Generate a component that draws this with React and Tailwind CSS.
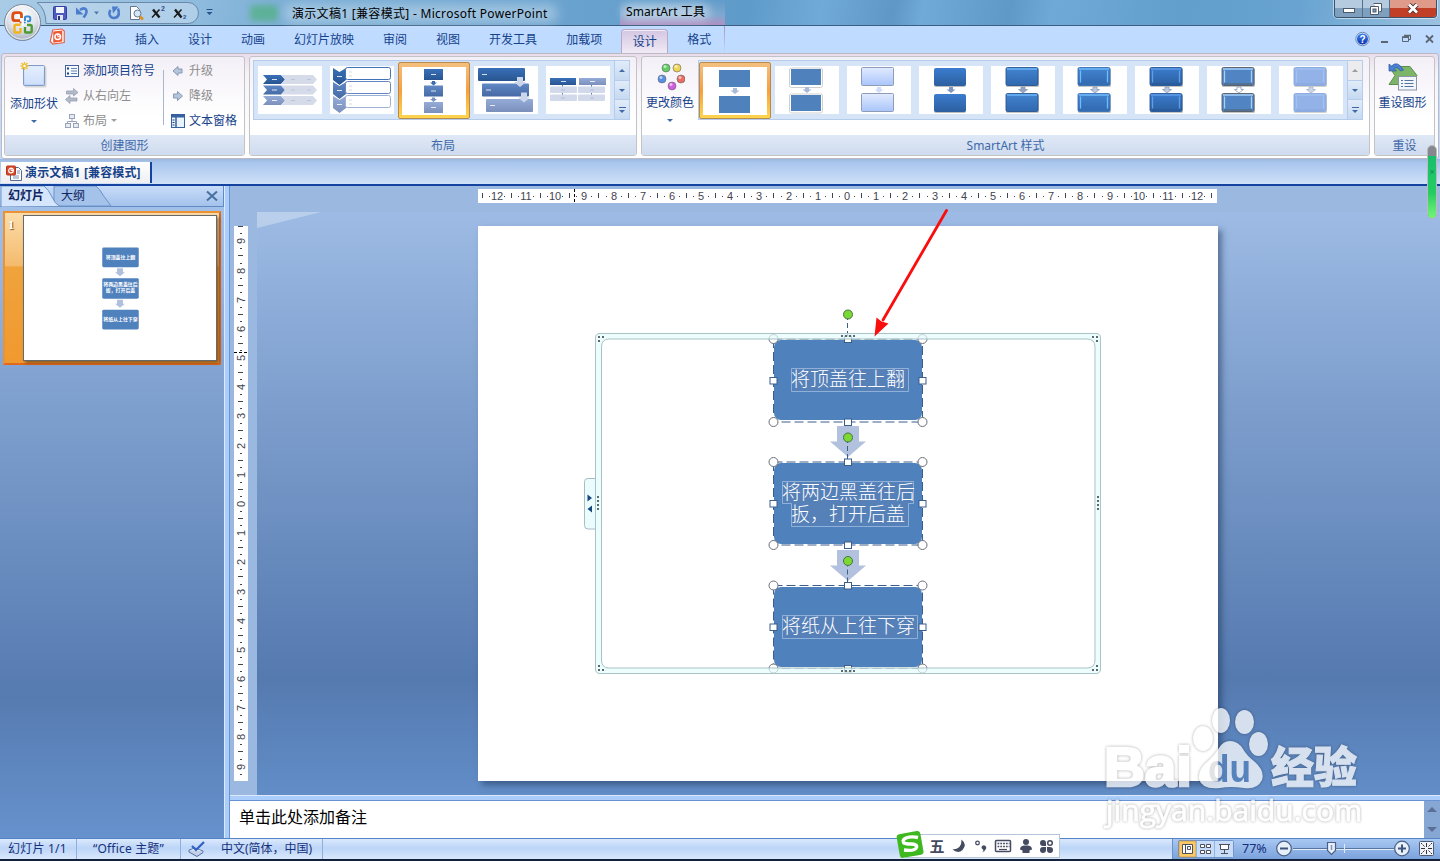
const ribbonTabs = ["开始", "插入", "设计", "动画", "幻灯片放映", "审阅", "视图", "开发工具", "加载项"];

const nodes = [
  { y: 340, h: 80, lines: [["将顶盖往上翻", 791, 385.5]], box: "M791.5 368.5h117v23h-117z" },
  {
    y: 463,
    h: 81,
    lines: [
      ["将两边黑盖往后", 782, 498.5],
      ["扳，打开后盖", 791, 520.5],
    ],
    box: "M782.5 481.5h131v22h-5v23h-117v-23h-9z",
  },
  { y: 587, h: 80, lines: [["将纸从上往下穿", 782, 632.5]], box: "M782.5 615.5h135v23h-135z" },
];

const thumbNodes = [
  { y: 247, h: 20, lines: ["将顶盖往上翻"] },
  { y: 278, h: 21, lines: ["将两边黑盖往后", "扳，打开后盖"] },
  { y: 310, h: 20, lines: ["将纸从上往下穿"] },
];

const Gradients = () => (
  <svg width="0" height="0" className="absolute">
    <defs>
      <linearGradient id="blue1" x2="0" y2="1">
        <stop stopColor="#3a70b8" />
        <stop offset="1" stopColor="#285590" />
      </linearGradient>
      <linearGradient id="blue2" x2="0" y2="1">
        <stop stopColor="#6189c6" />
        <stop offset="1" stopColor="#4569a3" />
      </linearGradient>
      <linearGradient id="blue3" x2="0" y2="1">
        <stop stopColor="#95acd8" />
        <stop offset="1" stopColor="#7b8fbb" />
      </linearGradient>
      <linearGradient id="pale" x2="0" y2="1">
        <stop stopColor="#e2ebff" />
        <stop offset="1" stopColor="#a9c5fb" />
      </linearGradient>
      <linearGradient id="strong" x2="0" y2="1">
        <stop stopColor="#3b7ccf" />
        <stop offset="1" stopColor="#2c5f9f" />
      </linearGradient>
      <linearGradient id="glossy" x2="0" y2="1">
        <stop stopColor="#4384d0" />
        <stop offset="1" stopColor="#3068ae" />
      </linearGradient>
      <radialGradient id="orb" cx="0.5" cy="0.3" r="0.75">
        <stop stopColor="#ffffff" />
        <stop offset="0.55" stopColor="#dfe3ea" />
        <stop offset="1" stopColor="#9aa5b5" />
      </radialGradient>
      <linearGradient id="help" x2="0" y2="1">
        <stop stopColor="#3f86ee" />
        <stop offset="1" stopColor="#0b2fb0" />
      </linearGradient>
      <linearGradient id="pawText" gradientUnits="userSpaceOnUse" x1="1217" x2="1219" y1="0" y2="0">
        <stop stopColor="#d9dadc" />
        <stop offset="1" stopColor="#5581bb" />
      </linearGradient>
    </defs>
  </svg>
);

const Caret = ({ color = "#3f6aa5", className = "" }) => (
  <svg width="6" height="3" viewBox="0 0 6 3" className={className}>
    <path d="M0 0h6L3 3z" fill={color} />
  </svg>
);

const OfficeButton = () => (
  <svg className="absolute left-0 top-0 z-10" width="46" height="46" viewBox="0 0 46 46">
    <circle cx="22.5" cy="22.5" r="18" fill="url(#orb)" stroke="#77869b" />
    <circle cx="22.5" cy="22.5" r="16.7" fill="none" stroke="#fff" strokeOpacity="0.8" />
    <g fill="none" strokeLinejoin="round">
      <path d="M20 20.7h-4.500q-2.800 0-2.800-2.800v-2.200q0-3 3-3h3.500q2.300 0 2.300 2.300v3" stroke="#dd4f14" strokeWidth="2.8" />
      <path d="M25 21v-3.500q0-1 1-1h2.700q1.500 0 1.500 1.500v2q0 1.200-1.200 1.200H27" stroke="#3a8bd2" strokeWidth="2.1" />
      <path d="M20.500 24.700h-4.500q-1.500 0-1.500 1.500V31q0 1.500 1.500 1.500h3q1.500 0 1.500-1.500v-3" stroke="#f4b21b" strokeWidth="2.4" />
      <path d="M25 27v4.500q0 1 1 1h4q1.700 0 1.700-1.700v-4.300q0-1.500-1.500-1.500H27" stroke="#4f9b31" strokeWidth="2.4" />
    </g>
    <path d="M22.900 20.500v5M20.500 22.800h5" stroke="#fff" strokeWidth="1.2" />
    <circle cx="20.600" cy="22.600" r="1" fill="#dd4f14" />
    <circle cx="24.800" cy="22.600" r="1" fill="#3a8bd2" />
  </svg>
);

const QuickAccess = () => (
  <svg width="184" height="25" viewBox="36 0 184 25">
    <path d="M37 2.500h151a10.500 10.500 0 0 1 0 21H46Q46 9 37 2.500z" fill="#c2d9ee" fillOpacity="0.65" stroke="#6b89a8" />
    {/* save */}
    <rect x="53.5" y="6.5" width="13" height="13" rx="1" fill="#4e5cc0" stroke="#36409a" />
    <rect x="56" y="7" width="8" height="6" fill="#f2f5fd" />
    <rect x="57" y="15" width="6" height="5" fill="#e0e4f2" />
    <rect x="58" y="16" width="2" height="4" fill="#2e3474" />
    {/* undo and repeat */}
    <path d="M80 10q4-3 6-.5 1.800 3-2.500 8" fill="none" stroke="#4b7dcb" strokeWidth="2.6" />
    <path d="M76 7.500v7h7.500z" fill="#4b7dcb" />
    <path d="M94 11.500h5l-2.500 3z" fill="#5477a7" />
    <path d="M110.500 10q-1.500 2-1 4.500 1 3.500 4.500 3.500t4.700-3.500q.5-3-.8-6" fill="none" stroke="#4b7dcb" strokeWidth="2.6" />
    <path d="M112 6.500h6.500l-5.500 7z" fill="#4b7dcb" />
    {/* print preview */}
    <path d="M130.5 6.500h6l3 3v10h-9z" fill="#fff" stroke="#62748d" />
    <circle cx="137.5" cy="13.5" r="3.5" fill="#d4e6f7" stroke="#68788c" />
    <path d="M140 16.500l3 3" stroke="#d69327" strokeWidth="2.8" />
    {/* superscript and subscript */}
    <g stroke="#1a1a1a">
      <path d="M153 9.500l6.500 8M175 9.500l6.500 8" strokeWidth="2.400" />
      <path d="M159.500 9.500l-7.500 8M181.500 9.500l-7.500 8" strokeWidth="1.500" />
    </g>
    <text x="161" y="11" fontSize="7" fontWeight="700" fill="#27508f" fontFamily="Liberation Sans, sans-serif">2</text>
    <text x="183" y="19" fontSize="6" fontWeight="700" fill="#27508f" fontFamily="Liberation Sans, sans-serif">2</text>
    <path d="M206.5 9.500h6" stroke="#27508f" />
    <path d="M206.5 12h6l-3 3z" fill="#27508f" />
  </svg>
);

const WindowButtons = () => (
  <div className="mr-[3px] flex h-[18px] w-[103px] overflow-hidden rounded-b-[4px] border border-t-0 border-[#39536e] shadow-[0_0_0_1px_#ffffff80]">
    <div className="flex w-7 items-center justify-center border-r border-[#53708c] bg-linear-to-b from-[#b5cbe0] from-50% to-[#7e9fbd] to-50%">
      <div className="mt-1 h-[5px] w-3 border border-[#4b5b6c] bg-white"></div>
    </div>
    <div className="flex w-[27px] items-center justify-center border-r border-[#53708c] bg-linear-to-b from-[#b5cbe0] from-50% to-[#7e9fbd] to-50%">
      <svg width="12" height="12" viewBox="0 0 12 12">
        <path d="M3.500.5h8v8h-2M.5 3.500h8v8h-8z" fill="#fff" stroke="#4b5b6c" />
        <rect x="3" y="6" width="3" height="3" fill="#7e9fbd" stroke="#4b5b6c" />
      </svg>
    </div>
    <div className="flex flex-1 items-center justify-center bg-linear-to-b from-[#e09a8a] from-45% to-[#c23f27] to-50%">
      <svg width="12" height="11" viewBox="0 0 12 11">
        <path d="M2 1.500l8 8M10 1.500l-8 8" stroke="#533" strokeWidth="4.6" />
        <path d="M2 1.500l8 8M10 1.500l-8 8" stroke="#fff" strokeWidth="2.8" />
      </svg>
    </div>
  </div>
);

const TitleBar = () => (
  <div className="relative flex h-[26px] items-start border-b border-[#3c5f80] bg-[linear-gradient(100deg,#a9cbe6_0%,#8dbadd_14%,#75aad3_22%,#6ba3cf_38%,#5f9bca_52%,#70aad8_57%,#5f98c6_62%,#70aad9_64%,#5f99c8_70%,#6fa9d7_73%,#629fcd_82%,#68a3d1_90%,#9bc2e0_100%)]">
    <div className="absolute left-[250px] top-[5px] h-4 w-7 rounded bg-[#46b06b]/60 blur-[3px]"></div>
    <div className="absolute left-[284px] top-[4px] h-[19px] w-[274px] rounded-full bg-white/35 blur-[6px]"></div>
    <div className="absolute left-[620px] top-0 h-[25px] w-[105px] bg-linear-to-b from-transparent via-[#9db4d4]/50 via-60% to-[#b78fc2]/90"></div>
    <div className="absolute left-[622px] top-[4px] h-4 w-[88px] rounded-full bg-white/45 blur-[5px]"></div>
    <div className="ml-9">
      <QuickAccess />
    </div>
    <div className="relative ml-[72px] w-[334px] text-[12px] leading-[27px] tracking-[0.3px] text-black">演示文稿1 [兼容模式] - Microsoft PowerPoint</div>
    <div className="relative flex-1 text-[12px] leading-[23px] tracking-[0.1px] text-black">SmartArt 工具</div>
    <WindowButtons />
  </div>
);

const TabRow = () => (
  <div className="flex h-[27px] items-end bg-[#bfdbff] pl-[49px] text-[12px] text-[#15428b]">
    <svg width="18.5" height="18" viewBox="0 0 18 18" className="mb-[7px] shrink-0">
      <path d="M3.500 2l9-1 2.500 2v11.500L3.500 16 1 13.500z" fill="#fff" stroke="#e2644a" strokeWidth="1.200" />
      <path d="M4 3.500l9-1v11l-9 1.200z" fill="#ee5a36" />
      <circle cx="8.500" cy="8.700" r="2.800" fill="none" stroke="#fff" strokeWidth="1.500" />
      <path d="M8.500 8.700V5.500M8.500 8.700h3" stroke="#fff" />
    </svg>
    {ribbonTabs.map((t) => (
      <div key={t} className="px-[14.5px] leading-[26px]">{t}</div>
    ))}
    <div className="mx-[4.5px] w-[47px] rounded-t-[4px] border border-b-0 border-[#b7a9c6] bg-linear-to-b from-[#d3c6e2] to-[#f1eaf4] text-center leading-[23px] shadow-[inset_0_1px_0_#f3edf7]">设计</div>
    <div className="px-[14.5px] leading-[26px]">格式</div>
    <div className="-ml-[2px] h-full w-px bg-linear-to-b from-[#a79ac0] to-[#bfdbff]"></div>
    <svg width="90" height="20" viewBox="1350 29 90 20" className="mb-1 ml-auto">
      <circle cx="1362.5" cy="39" r="6" fill="url(#help)" stroke="#dce9fb" />
      <circle cx="1362.5" cy="39" r="6.7" fill="none" stroke="#4a6690" strokeWidth="0.7" />
      <text x="1362.5" y="43" textAnchor="middle" fontSize="10" fontWeight="700" fill="#fff" fontFamily="Liberation Sans, sans-serif">?</text>
      <path d="M1381 42h7" stroke="#5c6672" strokeWidth="2" />
      <path d="M1402.5 37.500h6v4h-6zM1404.500 37v-1.500h6v4h-2" fill="none" stroke="#5c6672" />
      <path d="M1402 37h7M1404 35.500h7" stroke="#5c6672" strokeWidth="1.500" />
      <path d="M1426 35.500l7 7M1433 35.500l-7 7" stroke="#5c6672" strokeWidth="1.8" />
    </svg>
  </div>
);

const Group = ({ label, className, children }) => (
  <div className={`flex flex-col overflow-hidden rounded-[3px] border border-[#c3c3c6] bg-linear-to-b from-[#f3eff7] via-white via-60% to-white ${className}`}>
    <div className="flex h-20 px-1 pt-[3px]">{children}</div>
    <div className="h-5 bg-linear-to-b from-[#dfe8f6] to-[#cfdbee] text-center text-[12px] leading-[21px] text-[#3e6aaa]">{label}</div>
  </div>
);

const SmallButton = ({ icon, label, disabled, caret }) => (
  <div className={`flex h-[25px] items-center gap-1 text-[12px] ${disabled ? "text-[#8d8d8d]" : "text-[#15428b]"}`}>
    {icon}
    <span>{label}</span>
    {caret && <Caret color="#a0a0a0" className="ml-0" />}
  </div>
);

const BigButton = ({ icon, label, caret, className = "" }) => (
  <div className={`flex flex-col items-center text-[12px] text-[#15428b] ${className}`}>
    {icon}
    <span className="leading-[18px]">{label}</span>
    {caret && <Caret className="mt-[7px]" />}
  </div>
);

const Gallery = ({ items, selected, dim }) => (
  <div className="flex h-[60px] border border-[#b5cdeb] bg-[#d5e5f7]">
    {items.map((item, i) => (
      <div
        key={i}
        className={
          i === selected
            ? "mt-px flex h-[57px] w-[72px] items-center justify-center rounded-[2px] border border-[#b98a4b] bg-linear-to-b from-[#f3bf7e] via-[#f7a03c] to-[#fdd64f] p-[3px]"
            : "mt-px flex h-[56px] w-[72px] items-center justify-center p-1"
        }
      >
        <svg width="64" height="48" viewBox="0 0 64 48" className="bg-white">{item}</svg>
      </div>
    ))}
    <div className="flex w-[15px] flex-col border-l border-[#b5cdeb]">
      {[0, 1, 2].map((n) => (
        <div
          key={n}
          className={`flex flex-1 flex-col items-center justify-center gap-[2px] border-b border-[#b5cdeb] last:border-b-0 ${dim && n === 0 ? "bg-[#ececee]" : "bg-linear-to-b from-[#e2ecf9] to-[#c5d9f1]"}`}
        >
          {n === 2 && <div className="h-px w-[7px] bg-[#3f6aa5]"></div>}
          <Caret color={dim && n === 0 ? "#9c9c9c" : "#3f6aa5"} className={n === 0 ? "rotate-180" : ""} />
        </div>
      ))}
    </div>
  </div>
);

const Dash = ({ x, y, o = 0.8 }) => <rect x={x} y={y} width="5" height="1" fill="#fff" opacity={o} />;

const layouts = [
  <>
    {["blue1", "blue2", "blue3"].map((c, i) => (
      <g key={c} transform={`translate(5 ${9 + i * 10.5})`}>
        <path d="M0 0h18l4 4.500-4 4.500H0l4-4.500z" fill={`url(#${c})`} />
        <path d="M18 0h16l4 4.500-4 4.500H18l4-4.500zM34 0h16l4 4.500-4 4.500H34l4-4.500z" fill="#d5dbe9" />
        <Dash x={9} y={4} />
        <path d="M28 4.500h4M44 4.500h4" stroke="#bcc5d9" />
      </g>
    ))}
  </>,
  <>
    {["blue1", "blue2", "blue3"].map((c, i) => (
      <g key={c} transform={`translate(3 ${2 + i * 14})`}>
        <path d="M0 0l6.500 4L13 0v12l-6.500 5L0 12z" fill={`url(#${c})`} />
        <rect x="12.5" y="-0.500" width="45" height="12" rx="2" fill="#fff" stroke={["#4272b8", "#6487c2", "#9fb0d6"][i]} />
        <path d="M16 4h3M16 8h3" stroke="#d5d9e2" />
        <Dash x={4} y={8} />
      </g>
    ))}
  </>,
  <>
    {["blue1", "blue2", "blue3"].map((c, i) => (
      <g key={c} transform={`translate(0 ${2 + i * 16.5})`}>
        <rect x="22" width="19" height="11" fill={`url(#${c})`} />
        <Dash x={29} y={5} />
        {i < 2 && <path d="M30 12h3v1.500h2l-3.500 3-3.500-3h2z" fill={i ? "#7d95c5" : "#3a6cb2"} />}
      </g>
    ))}
  </>,
  <>
    {["blue1", "blue2", "blue3"].map((c, i) => (
      <g key={c} transform={`translate(${4 + i * 4} ${2 + i * 15.5})`}>
        <rect width="47" height="13" rx="1" fill={`url(#${c})`} />
        <Dash x={4} y={6} />
      </g>
    ))}
    <path d="M43 11h6v5h3l-6 5-6-5h3zM47 26.500h6v5h3l-6 5-6-5h3z" fill="#ccd6eb" />
  </>,
  <>
    <path d="M16.5 19v10M45.500 19v10" stroke="#5f7fb5" />
    <rect x="4" y="12" width="26" height="7" fill="url(#blue1)" />
    <rect x="33" y="12" width="27" height="7" fill="url(#blue3)" />
    {[20.5, 28.5].map((y) => (
      <g key={y}>
        <rect x="4" y={y} width="27" height="6.5" rx="1" fill="#d2d9ea" />
        <rect x="32" y={y} width="27" height="6.5" rx="1" fill="#d2d9ea" />
        <path d={`M15 ${y + 3.5}h4M44 ${y + 3.5}h4`} stroke="#b3bed7" />
      </g>
    ))}
    <Dash x={15} y={15} />
    <Dash x={44} y={15} />
  </>,
];

const MiniArrow = ({ fill = "#a9b9da", stroke = "none" }) => (
  <path d="M30 21h4v2.500h2.500L32 27l-4.500-3.500H30z" fill={fill} stroke={stroke} strokeWidth="0.8" />
);

const BevelStyle = ({ fill, edge, glow, side, arrow }) => (
  <>
    {[1.5, 27.5].map((y) => (
      <g key={y}>
        <rect x="15" y={y + 1} width="33" height="18.5" rx="1.5" fill="#555" opacity="0.35" />
        <rect x="15" y={y} width="32" height="18" rx="1.5" fill={fill} stroke={edge} strokeWidth="0.9" />
        <path d={`M16 ${y + 1.5}h30`} stroke={glow} strokeWidth="1.5" />
        {side && <path d={`M17.500 ${y + 3}v12M44.500 ${y + 3}v12`} stroke={glow} strokeWidth="1.3" />}
        {side && <path d={`M17 ${y + 16.5}h28`} stroke={edge} strokeWidth="1.5" opacity="0.6" />}
      </g>
    ))}
    <MiniArrow fill={arrow || "#bcc9e2"} stroke="#8a99b5" />
  </>
);

const styles = [
  <>
    <rect x="16" y="3" width="31" height="17" fill="#4f81bd" />
    <rect x="16" y="29" width="31" height="17" fill="#4f81bd" />
    <MiniArrow />
  </>,
  <>
    <rect x="14.5" y="2" width="33" height="19.5" rx="2" fill="#fff" stroke="#cfcfcf" />
    <rect x="14.5" y="28" width="33" height="19" rx="2" fill="#fff" stroke="#cfcfcf" />
    <rect x="16" y="3" width="30" height="16" fill="#4f81bd" />
    <rect x="16" y="29" width="30" height="16" fill="#4f81bd" />
    <MiniArrow />
  </>,
  <>
    <rect x="14.5" y="1.5" width="32" height="18" rx="1" fill="url(#pale)" stroke="#8e9cba" />
    <rect x="14.5" y="27.5" width="32" height="18" rx="1" fill="url(#pale)" stroke="#8e9cba" />
    <MiniArrow fill="#cfdcf7" />
  </>,
  <>
    <rect x="15" y="3" width="32" height="18" rx="2" fill="#777" opacity="0.5" />
    <rect x="15" y="29" width="32" height="18" rx="2" fill="#777" opacity="0.5" />
    <rect x="15" y="2" width="32" height="18" rx="2" fill="url(#strong)" />
    <rect x="15" y="28" width="32" height="18" rx="2" fill="url(#strong)" />
    <MiniArrow fill="#8096c2" />
  </>,
  <BevelStyle fill="url(#glossy)" edge="#27568f" glow="#6cb6f8" arrow="#94a5c6" />,
  <BevelStyle fill="url(#glossy)" edge="#3a72b5" glow="#70bbfa" side />,
  <BevelStyle fill="url(#strong)" edge="#255698" glow="#5f9de6" side />,
  <BevelStyle fill="#5084c2" edge="#555b64" glow="#a5d0f8" side arrow="#fff" />,
  <g opacity="0.75">
    <BevelStyle fill="#7099df" edge="#5f89d0" glow="#83aeee" side />
  </g>,
];

const Ribbon = () => (
  <div className="mx-[1px] flex h-[106px] gap-1 rounded-[3px] border border-[#bdb9c3] bg-linear-to-b from-[#e9ddec] via-[#f6f4f8] via-20% to-white px-[2px] pb-[2px] pt-[2px]">
    <Group label="创建图形" className="w-[241px]">
      <BigButton
        className="-ml-[3px] w-[56px]"
        label="添加形状"
        caret
        icon={
          <svg width="30" height="35" viewBox="0 0 30 35">
            <rect x="5.5" y="6.5" width="22" height="21" rx="1.5" fill="#888" opacity="0.3" />
            <rect x="4.5" y="5.5" width="21" height="20" rx="1" fill="url(#pale)" stroke="#7f9cc4" />
            <rect x="5.5" y="6.5" width="19" height="18" fill="#e6f0fb" opacity="0.6" />
            <path d="M5.5 2v8M1.500 6h8M2.500 3l6 6M8.500 3l-6 6" stroke="#efbf2e" strokeWidth="1.4" />
            <circle cx="5.5" cy="6" r="1.2" fill="#fff" />
          </svg>
        }
      />
      <div className="-mt-[2px] ml-[3px] mr-[6px] flex w-[92px] flex-col">
        <SmallButton
          label="添加项目符号"
          icon={
            <svg width="14" height="12" viewBox="0 0 14 12">
              <rect x="0.5" y="0.5" width="13" height="11" fill="#f4f8ff" stroke="#41629a" />
              <path d="M2 3.500h2M2 8.500h2" stroke="#1f3f78" strokeWidth="2" />
              <path d="M6 3.500h6M6 6h6M6 8.500h6" stroke="#6583b4" />
            </svg>
          }
        />
        <SmallButton
          disabled
          label="从右向左"
          icon={
            <svg width="14" height="16" viewBox="0 0 14 16" fill="#b3bac9" stroke="#8e98ad" strokeWidth="0.7">
              <path d="M1.500 3h7V.5L13 4.500 8.500 8V6h-7z" />
              <path d="M12 10H5V7.500L.5 11.500 5 15.500V13h7z" />
            </svg>
          }
        />
        <SmallButton
          disabled
          caret
          label="布局"
          icon={
            <svg width="14" height="14" viewBox="0 0 14 14" fill="#e8ebf2" stroke="#99a4ba">
              <path d="M7 5v3M2.500 9V7.500h9V9" fill="none" />
              <rect x="4.5" y="0.5" width="5" height="4" />
              <rect x="0.5" y="9.5" width="5" height="4" />
              <rect x="8.5" y="9.5" width="5" height="4" />
            </svg>
          }
        />
      </div>
      <div className="mt-[10px] h-[55px] w-px shrink-0 bg-[#a9b7cc]"></div>
      <div className="-mt-[2px] ml-[7px] flex flex-col">
        <SmallButton
          disabled
          label="升级"
          icon={
            <svg width="14" height="12" viewBox="0 0 14 12">
              <path d="M2 6l5-4.500V4h4v4H7v2.500z" fill="#b5c5da" stroke="#8798b3" />
            </svg>
          }
        />
        <SmallButton
          disabled
          label="降级"
          icon={
            <svg width="14" height="12" viewBox="0 0 14 12">
              <path d="M11.500 6l-5-4.500V4h-4v4h4v2.500z" fill="#b5c5da" stroke="#8798b3" />
            </svg>
          }
        />
        <SmallButton
          label="文本窗格"
          icon={
            <svg width="14" height="14" viewBox="0 0 14 14">
              <rect x="0.5" y="0.5" width="13" height="13" fill="#eaf2fc" stroke="#35619f" />
              <path d="M0 2h14" stroke="#35619f" strokeWidth="3" />
              <path d="M5 3v11" stroke="#35619f" strokeWidth="1.5" />
              <path d="M1.500 6h2M1.500 8.500h2M1.500 11h2" stroke="#1f3f78" />
            </svg>
          }
        />
      </div>
    </Group>
    <Group label="布局" className="w-[388px] [&>div:first-child]:px-[3px]">
      <Gallery items={layouts} selected={2} />
    </Group>
    <Group label="SmartArt 样式" className="w-[729px] [&>div:first-child]:px-0">
      <BigButton
        className="w-[56px] shrink-0 pt-px"
        label="更改颜色"
        caret
        icon={
          <svg width="30" height="33" viewBox="0 0 30 33">
            {[
              [11, 7, "#5fcf62"],
              [22, 7, "#f0d552"],
              [7, 18, "#5590e6"],
              [26, 18, "#ea6b60"],
              [17, 25, "#cf5fe0"],
            ].map(([x, y, c]) => (
              <g key={c}>
                <circle cx={x} cy={y} r="4" fill={c} stroke="#666" strokeOpacity="0.6" />
                <circle cx={x - 1} cy={y - 1.5} r="1.5" fill="#fff" opacity="0.6" />
              </g>
            ))}
          </svg>
        }
      />
      <Gallery items={styles} selected={0} dim />
    </Group>
    <Group label="重设" className="w-[61px] [&>div:first-child]:px-0">
      <BigButton
        className="-ml-[2px] w-full pt-px"
        label="重设图形"
        icon={
          <svg width="34" height="33" viewBox="0 0 34 33">
            <path d="M3 5.500h21l7 9-7 9H3l6-9z" fill="#7db568" stroke="#5b8f4a" />
            <rect x="12.5" y="15.5" width="18" height="13.5" fill="#f2f5fa" stroke="#8a96a8" />
            <path d="M15 19.500h2M15 22.500h2M15 25.500h2M18.500 19.500h9M18.500 22.500h9M18.500 25.500h9" stroke="#56729e" />
            <path d="M3 10V3l2.500 2q6-6 12 4l-3 1q-3.500-5-6.500-2.500l2.500 2.500z" fill="#4b80d2" stroke="#2d5aa5" strokeWidth="0.7" />
          </svg>
        }
      />
    </Group>
  </div>
);

const DocumentTabs = () => (
  <div className="flex h-[27px] items-end border-b-2 border-[#1443a0] bg-linear-to-b from-[#9cb8de] via-[#a9c6ee] via-15% to-[#d0e1f8] pb-px">
    <div className="ml-[1px] flex h-[21px] w-[151px] items-center gap-[3px] border-r-2 border-[#1443a0] bg-linear-to-b from-white to-[#efeff2] pl-[5px] text-[12px] font-bold tracking-[0.15px] text-[#15428b]">
      <svg width="16" height="16" viewBox="0 0 16 16" className="shrink-0">
        <path d="M4.500 2.500h8l3 3v10h-11z" fill="#fff" stroke="#56698f" />
        <path d="M7 11h6M7 13h6M11 6h3M11 8h3" stroke="#7e8fb3" />
        <rect x="0.5" y="1" width="9" height="9" rx="1" fill="#d9482b" stroke="#b5351c" />
        <circle cx="5" cy="5.5" r="2.3" fill="none" stroke="#fff" strokeWidth="1.2" />
        <path d="M5 5.500V3M5 5.500h3" stroke="#fff" />
      </svg>
      演示文稿1 [兼容模式]
    </div>
  </div>
);

const SidePanel = () => (
  <div className="flex w-[224px] shrink-0 flex-col bg-[linear-gradient(#a6c3ea_0px,#9cbae4_60px,#83a4d2_185px,#567bb1_510px,#6792cd_653px)]">
    <div className="relative h-[21px] border-b border-r border-[#5d8bc6] bg-linear-to-b from-[#c8dcf8] to-[#a4c2ec]">
      <svg width="224" height="21" viewBox="0 0 224 21">
        <path d="M54 20V0h42q4 3 7 9l8 11z" fill="#a5c2ea" stroke="#6d94c8" />
        <path d="M1 21V0h43q5 4 8 11 3 7 8 9.500z" fill="#d5e5fb" stroke="#6d94c8" />
        <path d="M207 5.500l10 9M217 5.500l-10 9" stroke="#47719f" strokeWidth="2" />
      </svg>
      <div className="absolute left-2 top-0 flex text-[12px] leading-[20px] text-[#10255e]">
        <span className="w-[53px] font-bold">幻灯片</span>
        <span>大纲</span>
      </div>
    </div>
    <div className="ml-[3px] mt-1 flex h-[154px] w-[218px] border-2 border-b-[#e2691b] border-l-[#eb9334] border-r-[#e2691b] border-t-[#eb9334] bg-[linear-gradient(#fbdcaa_0%,#f4bb6d_35%,#f0a33c_36%,#f0992f_100%)]">
      <div className="w-[18px] pl-[3px] pt-[3px] font-['Liberation_Serif',serif] text-[12px] font-bold leading-[18px] text-white [text-shadow:1px_1px_1px_#7a5020]">1</div>
      <svg width="194" height="146" viewBox="23 215 194 146" className="mt-[2px] border border-[#696969] bg-white shadow-[2px_2px_3px_#00000070]">
        {thumbNodes.map((n) => (
          <g key={n.y}>
            <rect x="102" y={n.y} width="37" height={n.h} rx="1.5" fill="#4f81bd" />
            {n.lines.map((l, i) => (
              <text
                key={l}
                x="120.5"
                y={n.y + (n.lines.length > 1 ? 8 + i * 6 : 11.5)}
                textAnchor="middle"
                fontSize="5"
                fontWeight="700"
                fill="#fff"
              >
                {l}
              </text>
            ))}
          </g>
        ))}
        <path d="M117 268h6v4h2l-5 4-5-4h2zM117 300h6v4h2l-5 4-5-4h2z" fill="#b1c0dc" />
      </svg>
    </div>
  </div>
);

const marks = (n) => Array.from({ length: n * 2 + 1 }, (_, i) => i - n);
const STEP = 29.17;

const HorizontalRuler = () => (
  <svg width="739" height="14" viewBox="-369 0 739 14" className="bg-white text-[11px]" fontFamily="Liberation Sans, sans-serif">
    {marks(12).map((n) => (
      <g key={n} transform={`translate(${Math.round(n * STEP)} 0)`} fill="#3f4450">
        <text x="0" y="11" textAnchor="middle">{Math.abs(n)}</text>
        <rect x="7" y="7" width="1" height="1" />
        <rect x="-8" y="7" width="1" height="1" />
        <rect x="14" y="4" width="1" height="5" />
        {n === -12 && <rect x="-15" y="4" width="1" height="5" />}
      </g>
    ))}
    <path d="M-272.5 0v14" stroke="#000" strokeDasharray="3 2" />
  </svg>
);

const VerticalRuler = () => (
  <svg width="14" height="555" viewBox="0 -278 14 555" className="bg-white text-[11px]" fontFamily="Liberation Sans, sans-serif">
    {marks(9).map((n) => (
      <g key={n} transform={`translate(0 ${Math.round(n * STEP)})`} fill="#3f4450">
        <text transform="translate(11 0) rotate(-90)" textAnchor="middle">{Math.abs(n)}</text>
        <rect x="6" y="7" width="2" height="1" />
        <rect x="6" y="-8" width="2" height="1" />
        <rect x="4" y="14" width="5" height="1" />
        {n === -9 && <rect x="4" y="-15" width="5" height="1" />}
      </g>
    ))}
    <path d="M0 -151.500h14" stroke="#000" strokeDasharray="3 2" />
  </svg>
);

const Dots = ({ points }) => points.map(([x, y]) => <rect key={`${x}-${y}`} x={x} y={y} width="2" height="2" fill="#5c6a70" />);

const Diagram = () => (
  <svg width="740" height="555" viewBox="478 226 740 555" className="overflow-visible">
    {nodes.map((n) => (
      <rect key={n.y} x="774" y={n.y} width="148" height={n.h} rx="7" fill="#4f81bd" />
    ))}
    <path d="M837 426h22v15.500h7L848 457l-18-15.500h7zM837 550h22v15.500h7L848 581l-18-15.500h7z" fill="#b1c1de" />
    {nodes.map((n) => (
      <g key={n.y}>
        <path d={n.box} fill="#5580b8" stroke="#8fb0d8" />
        {n.lines.map(([text, x, y]) => (
          <text key={text} x={x} y={y} fontSize="19" fontWeight="300" fill="#fff">{text}</text>
        ))}
      </g>
    ))}
    {[339, 462, 585.5].map((y) => (
      <g key={y} fill="#fff" stroke="#3b5f8c">
        <rect x="773.5" y={y} width="149" height="83" fill="none" strokeDasharray="9 4" />
        <path d={`M847.5 ${y - 24}v22`} strokeDasharray="5 3" />
        {[[773.5, y], [922.5, y], [773.5, y + 83], [922.5, y + 83]].map(([cx, cy]) => (
          <circle key={`${cx}-${cy}`} cx={cx} cy={cy} r="4.5" stroke="#6a6f78" />
        ))}
        {[[848, y], [848, y + 83], [773.5, y + 41.5], [922.5, y + 41.5]].map(([cx, cy]) => (
          <rect key={`${cx}-${cy}`} x={cx - 3.5} y={cy - 3} width="7" height="6.5" />
        ))}
        <circle cx="848" cy={y - 24.5} r="4.5" fill="#7bd934" stroke="#4c7048" />
      </g>
    ))}
    {/* canvas frame lies over the outermost handles */}
    <path d="M596 478.500h-8q-3.500 0-3.500 3v44q0 3.500 3.500 3.500h8" fill="#eafcfe" stroke="#a9bcc4" />
    <path
      fillRule="evenodd"
      d="M600 333.500h496q4.500 0 4.500 4.500v331q0 4.500-4.500 4.500H600q-4.500 0-4.500-4.500V338q0-4.500 4.500-4.500zM609 339q-7.500 0-7.500 8v313q0 8 7.500 8h478q8 0 8-8V347q0-8-8-8z"
      fill="#e6fbfc"
      fillOpacity="0.7"
      stroke="#a9c3c6"
    />
    <path d="M587.5 494.500v7l4.500-3.500zM592 505.500v7l-4.500-3.500z" fill="#17467f" />
    <Dots points={[[598, 336], [602, 336], [598, 340], [1092, 336], [1096, 336], [1096, 340], [598, 665], [598, 669], [602, 669], [1096, 665], [1096, 669], [1092, 669]]} />
    <Dots points={[[841, 335], [845, 335], [849, 335], [853, 335], [841, 670], [845, 670], [849, 670], [853, 670]]} />
    <Dots points={[[597, 496], [597, 500], [597, 504], [597, 508], [1097, 496], [1097, 500], [1097, 504], [1097, 508]]} />
    {/* callout arrow */}
    <path d="M946.5 210.500L883 320" stroke="#fb0d0d" strokeWidth="2.8" strokeLinecap="round" />
    <path d="M874.500 336.500l2-19 5 4 7 2z" fill="#fb0d0d" />
  </svg>
);

const Workspace = () => (
  <div className="flex min-w-0 flex-1 flex-col">
    <div className="flex h-[609px] flex-col bg-[#9bb8e0]">
      <div className="h-[26px] pl-[248px] pt-[3px]">
        <HorizontalRuler />
      </div>
      <div className="flex h-[583px]">
        <div className="w-[27px] shrink-0 pl-1 pt-[14px]">
          <VerticalRuler />
        </div>
        <div className="relative flex-1 bg-[linear-gradient(#9dbbe4_0%,#83a3d1_27%,#557ab0_80%,#628dc7_100%)] pl-[221px] pt-[14px]">
          <svg width="64" height="17" viewBox="0 0 64 17" className="absolute left-0 top-0">
            <path d="M0 0h64L0 16z" fill="#fff" opacity="0.3" />
          </svg>
          <div className="h-[555px] w-[740px] bg-white shadow-[4px_4px_6px_#1c325480]">
            <Diagram />
          </div>
        </div>
      </div>
    </div>
    <div className="h-[6px] border-y border-b-[#6792d6] border-t-[#dceafd] bg-[#abcdfb]"></div>
    <div className="flex flex-1">
      <div className="flex-1 bg-white pl-[9px] pt-[4px] text-[16px] leading-6 text-black">单击此处添加备注</div>
      <div className="flex w-4 flex-col items-center justify-between bg-[#86a6d4] py-[6px]">
        <Caret color="#5b6f96" className="h-[5px] w-[10px] rotate-180" />
        <Caret color="#5b6f96" className="h-[5px] w-[10px]" />
      </div>
    </div>
  </div>
);

const StatusBar = () => (
  <div className="flex h-[23px] border-b-2 border-t border-b-[#14213a] border-t-[#5584c6] bg-linear-to-b from-[#dbe9fc] via-[#bcd5f7] via-45% to-[#d9e8fc] text-[12px] leading-[20px] text-[#15307c]">
    <div className="w-[77px] border-r border-[#8fb0df] pl-2 tracking-[0.2px]">幻灯片 1/1</div>
    <div className="w-[104px] border-r border-[#8fb0df] text-center tracking-[0.2px]">“Office 主题”</div>
    <div className="flex w-[142px] items-center border-r border-[#8fb0df] pl-[7px]">
      <svg width="18" height="16" viewBox="0 0 18 16">
        <path d="M1 9l6-2 8 3-6 4z" fill="#fff" stroke="#5670a8" />
        <path d="M1 9v2l8 4.500 6-4V10" fill="#c3d0ea" stroke="#5670a8" />
        <path d="M4 5l4 4 8-8" fill="none" stroke="#315fc4" strokeWidth="2.2" />
      </svg>
      <span className="ml-[15px]">中文(简体，中国)</span>
    </div>
    <div className="flex-1"></div>
    <div className="flex w-[268px] border-l border-[#6792cf] bg-linear-to-b from-[#a9c8f3] to-[#7ba2dc] pl-[5px]">
      <svg width="262" height="20" viewBox="1178 839 262 20">
        <rect x="1178.5" y="840.5" width="55" height="17" rx="1" fill="#c7dcf8" stroke="#7096cc" />
        <rect x="1179" y="841" width="17" height="16" fill="#fcc967" stroke="#b0864a" strokeWidth="0.6" />
        <path d="M1196.5 841v16M1214.500 841v16" stroke="#94b4e0" />
        <g fill="#fff" stroke="#4b505a">
          <path d="M1182.5 844.500h10v9h-10zM1185.500 844.500v9M1187.500 846.500h3v3h-3z" />
          <path d="M1200.5 844.500h4v3h-4zM1206.500 844.500h4v3h-4zM1200.500 850.500h4v3h-4zM1206.500 850.500h4v3h-4z" />
          <path d="M1219 844.500h11M1220.500 844.500v5h8v-5M1224.500 849.500v4M1221 853.500h7" />
        </g>
        <text x="1242" y="853" fontSize="12.5" fill="#15307c">77%</text>
        <path d="M1293 848.500h101" stroke="#56759f" />
        <path d="M1293 849.500h101M1344.500 844v9" stroke="#dfecfd" />
        <g fill="#e7effa" stroke="#4a6086" strokeWidth="1.2">
          <circle cx="1284" cy="848.5" r="7.3" />
          <circle cx="1402" cy="848.5" r="7.3" />
          <path d="M1327.5 842.500h8v8l-4 4-4-4z" />
        </g>
        <path d="M1280 848.500h8M1398 848.500h8M1402 844.500v8" stroke="#3f547a" strokeWidth="2" />
        <path d="M1331.5 845v5" stroke="#7f94b8" strokeWidth="1.5" />
        <rect x="1419.5" y="841.5" width="14" height="14" rx="1" fill="#f0f4fa" stroke="#4b5b76" />
        <path d="M1421 843l3.500 3.500M1432 843l-3.500 3.500M1421 854l3.500-3.500M1432 854l-3.500-3.500" stroke="#333" strokeDasharray="2 1" />
        <path d="M1426.5 843v4M1426.500 850v4M1421 848.500h4M1428 848.500h4" stroke="#333" />
      </svg>
    </div>
  </div>
);

const InputMethodBar = () => (
  <div className="absolute left-[896px] top-[830px] flex">
    <svg width="164" height="29" viewBox="896 830 164 29">
      <rect x="906.5" y="834.5" width="153" height="23" fill="#fff" stroke="#b5c6dc" />
      <rect x="898" y="832.5" width="24" height="24" rx="3" fill="#3eb81f" transform="rotate(-10 910 844)" />
      <path
        d="M918 837.500q-7-1.500-12 .5-4 2-2.500 4.500 1.500 1.500 7.500 1.500 6.500.2 5.500 3.500-1.500 3.800-12.500 2.500"
        fill="none"
        stroke="#fff"
        strokeWidth="3.4"
      />
      <text x="929.5" y="851.5" fontSize="15" fontWeight="700" fill="#454c61">五</text>
      <path d="M961.5 839.500q6 5 1 10.500-4.500 4-10-.5 9.500-.5 9-10z" fill="#454c61" />
      <circle cx="977.5" cy="843" r="1.8" fill="none" stroke="#454c61" strokeWidth="1.3" />
      <path d="M981.5 848a2.400 2.400 0 1 1 4 1.500q-.7 2-3.500 2.700 2-1.500 1.200-2.500z" fill="#454c61" />
      <rect x="995.5" y="840.5" width="15" height="11" rx="1" fill="#fff" stroke="#454c61" strokeWidth="1.5" />
      <path d="M997.5 843.500h12M997.500 846.500h12" stroke="#454c61" strokeWidth="1.5" strokeDasharray="1.8 1" />
      <path d="M999 849.500h8" stroke="#454c61" strokeWidth="1.2" />
      <circle cx="1026" cy="842" r="3" fill="#454c61" />
      <path d="M1020 849.500q0-3.500 4-4h4q4 .5 4 4l-2.500 1v2.500h-7v-2.500z" fill="#454c61" />
      <g fill="#454c61">
        <path d="M1040 843a3 3 0 1 1 6 0v3h-3a3 3 0 0 1-3-3zM1040 850a3 3 0 0 1 3-3h3v3a3 3 0 0 1-6 0zM1047 847h3a3 3 0 1 1-3 3z" />
        <circle cx="1050" cy="843" r="2.3" fill="#fff" stroke="#454c61" strokeWidth="1.5" />
      </g>
    </svg>
  </div>
);

const Watermark = () => (
  <svg
    width="270"
    height="130"
    viewBox="1100 700 270 130"
    className="pointer-events-none absolute left-[1100px] top-[700px] opacity-75 drop-shadow-[0_0_1.5px_#00000070]"
    fill="#fff"
  >
    <text
      x="1104"
      y="786"
      fontSize="56"
      fontWeight="700"
      textLength="88"
      lengthAdjust="spacingAndGlyphs"
      stroke="#fff"
      strokeWidth="2.5"
      fontFamily="Liberation Sans, sans-serif"
    >
      Bai
    </text>
    <ellipse cx="1203" cy="738.5" rx="10" ry="12.5" />
    <ellipse cx="1221" cy="720.5" rx="9" ry="12.5" />
    <ellipse cx="1244.5" cy="722" rx="9.5" ry="12" />
    <ellipse cx="1258.5" cy="744" rx="9.5" ry="12" />
    <path d="M1230 741q8 0 13 8 4 7 12 13 10 9 7 18-5 10-18 8-14-2-24 0-18 2-21-9-1-10 9-18 7-6 11-13 4-7 11-7z" />
    <text x="1208" y="782" fontSize="38" fontWeight="700" fill="url(#pawText)" textLength="43" lengthAdjust="spacingAndGlyphs" fontFamily="Liberation Sans, sans-serif">
      du
    </text>
    <text x="1271" y="783" fontSize="43" fontWeight="900" stroke="#fff" strokeWidth="1">经验</text>
    <text
      x="1106"
      y="821"
      fontSize="29"
      textLength="256"
      lengthAdjust="spacingAndGlyphs"
      stroke="#fff"
      strokeWidth="0.8"
      fontFamily="Open Sans, sans-serif"
    >
      jingyan.baidu.com
    </text>
  </svg>
);

export default function App() {
  return (
    <div className="relative flex h-[861px] w-[1440px] flex-col overflow-hidden whitespace-nowrap bg-[#bfdbff] font-['Noto_Sans','Noto_Sans_CJK_SC',sans-serif]">
      <Gradients />
      <OfficeButton />
      <TitleBar />
      <TabRow />
      <Ribbon />
      <DocumentTabs />
      <div className="flex h-[652px]">
        <SidePanel />
        <div className="w-[6px] shrink-0 border-x border-l-[#dceafd] border-r-[#6792d6] bg-[#abcdfb]"></div>
        <Workspace />
      </div>
      <StatusBar />
      <InputMethodBar />
      <Watermark />
      {/* floating level meter */}
      <div className="absolute left-[1427px] top-[145px] flex h-[74px] w-[10px] flex-col overflow-hidden rounded-full border border-[#b8bcc0] bg-[#85898f] pt-[10px]">
        <div className="flex-1 bg-linear-to-b from-[#18bf6b] via-[#25cc62] via-60% to-[#72f578] text-center text-[9px] leading-8 text-[#0b8a52]">×</div>
      </div>
    </div>
  );
}
